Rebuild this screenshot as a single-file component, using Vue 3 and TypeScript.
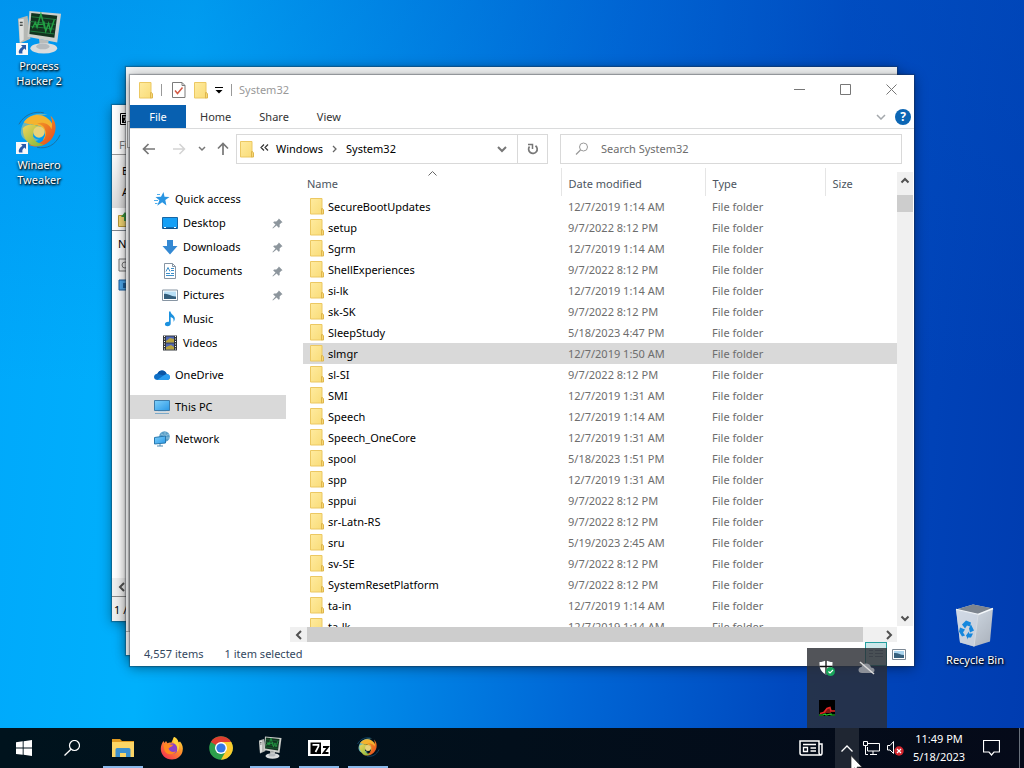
<script setup lang="ts">
import { ref } from 'vue'

interface FolderRow {
  name: string
  date: string
}

interface NavItem {
  label: string
  icon: string
  level: number
  pinned?: boolean
  gap?: boolean
  selected?: boolean
}

const rows: FolderRow[] = [
  { name: 'SecureBootUpdates', date: '12/7/2019 1:14 AM' },
  { name: 'setup', date: '9/7/2022 8:12 PM' },
  { name: 'Sgrm', date: '12/7/2019 1:14 AM' },
  { name: 'ShellExperiences', date: '9/7/2022 8:12 PM' },
  { name: 'si-lk', date: '12/7/2019 1:14 AM' },
  { name: 'sk-SK', date: '9/7/2022 8:12 PM' },
  { name: 'SleepStudy', date: '5/18/2023 4:47 PM' },
  { name: 'slmgr', date: '12/7/2019 1:50 AM' },
  { name: 'sl-SI', date: '9/7/2022 8:12 PM' },
  { name: 'SMI', date: '12/7/2019 1:31 AM' },
  { name: 'Speech', date: '12/7/2019 1:14 AM' },
  { name: 'Speech_OneCore', date: '12/7/2019 1:31 AM' },
  { name: 'spool', date: '5/18/2023 1:51 PM' },
  { name: 'spp', date: '12/7/2019 1:31 AM' },
  { name: 'sppui', date: '9/7/2022 8:12 PM' },
  { name: 'sr-Latn-RS', date: '9/7/2022 8:12 PM' },
  { name: 'sru', date: '5/19/2023 2:45 AM' },
  { name: 'sv-SE', date: '9/7/2022 8:12 PM' },
  { name: 'SystemResetPlatform', date: '9/7/2022 8:12 PM' },
  { name: 'ta-in', date: '12/7/2019 1:14 AM' },
  { name: 'ta-lk', date: '12/7/2019 1:14 AM' },
]
const selected = ref('slmgr')

const nav: NavItem[] = [
  { label: 'Quick access', icon: 'star', level: 0 },
  { label: 'Desktop', icon: 'desktop', level: 1, pinned: true },
  { label: 'Downloads', icon: 'download', level: 1, pinned: true },
  { label: 'Documents', icon: 'document', level: 1, pinned: true },
  { label: 'Pictures', icon: 'picture', level: 1, pinned: true },
  { label: 'Music', icon: 'music', level: 1 },
  { label: 'Videos', icon: 'video', level: 1 },
  { label: 'OneDrive', icon: 'onedrive', level: 0, gap: true },
  { label: 'This PC', icon: 'pc', level: 0, gap: true, selected: true },
  { label: 'Network', icon: 'network', level: 0, gap: true },
]

const apps = [
  { label: 'File Explorer', icon: 'explorer', open: true },
  { label: 'Firefox', icon: 'firefox', open: false },
  { label: 'Chrome', icon: 'chrome', open: false },
  { label: 'Process Hacker', icon: 'hacker', open: true },
  { label: '7-Zip', icon: 'sevenzip', open: true },
  { label: 'Winaero Tweaker', icon: 'winaero', open: true },
]
const query = ref('')
</script>

<template>
  <div class="desktop">
    <svg class="defs" aria-hidden="true">
      <defs>
        <linearGradient id="gFolder" x1="0" y1="0" x2="1" y2="1">
          <stop offset="0" stop-color="#ffeb9f" /><stop offset="1" stop-color="#f9dc79" />
        </linearGradient>
        <linearGradient id="gScreen" x1="0" y1="0" x2="1" y2="1">
          <stop offset="0" stop-color="#7fd0fb" /><stop offset="1" stop-color="#2a98e6" />
        </linearGradient>
        <linearGradient id="gBin" x1="0" y1="0" x2="1" y2="1">
          <stop offset="0" stop-color="#dce6f0" /><stop offset="1" stop-color="#a9b0ba" />
        </linearGradient>
        <linearGradient id="gFox" x1="1" y1="0" x2="0.2" y2="1">
          <stop offset="0" stop-color="#fff04a" /><stop offset="0.4" stop-color="#ff9a2a" /><stop offset="1" stop-color="#f53050" />
        </linearGradient>
        <linearGradient id="gBlade" x1="0" y1="0" x2="1" y2="1">
          <stop offset="0" stop-color="#f7b52a" /><stop offset="1" stop-color="#e5431d" />
        </linearGradient>
        <linearGradient id="gLeaf" x1="0" y1="0" x2="1" y2="1">
          <stop offset="0" stop-color="#f4d35a" /><stop offset="1" stop-color="#7cb83c" />
        </linearGradient>
        <symbol id="i-folder" viewBox="0 0 14 17">
          <path d="M.5.5h11.500v15.500H.5z" fill="url(#gFolder)" stroke="#ecc862" />
          <path d="M11.500 10.500h1l1 1.500v4h-2z" fill="#f6d878" stroke="#dfb64c" />
        </symbol>
        <symbol id="i-star" viewBox="0 0 16 16">
          <path d="M9.500 1l1 4.700 5 .3-4.200 3 1.100 5.500-4.200-3.200-5 3.500 2.200-5.500L1.500 6l5.500-.3z" fill="#2a95e2" />
          <path d="M0 9.500h4M1 12.500h2.500M3 3.500h3" stroke="#53b0ec" />
        </symbol>
        <symbol id="i-desktop" viewBox="0 0 16 16">
          <path d="M.5 2.500h15v11H.5z" fill="#16a0f6" stroke="#1766a5" />
          <path d="M1 13h14" stroke="#0e3c6c" /><path d="M2 12.500h2M12 12.500h2" stroke="#fff" />
        </symbol>
        <symbol id="i-download" viewBox="0 0 16 16">
          <path d="M5 1h6v6h4.500L8 15.500.5 7H5z" fill="#3489d3" />
        </symbol>
        <symbol id="i-document" viewBox="0 0 16 16">
          <path d="M2.500.5h8l3 3v12h-11z" fill="#fff" stroke="#8795a3" /><path d="M10.500.5v3h3" fill="none" stroke="#8795a3" />
          <path d="M4 8.500l2-4 2 4M9 5.500h3M9 7.500h3M4 10.500h4M9 10.500h3M4 12.500h8" fill="none" stroke="#3d8fc9" />
        </symbol>
        <symbol id="i-picture" viewBox="0 0 16 16">
          <path d="M.5 3h15v10.500H.5z" fill="#fff" stroke="#8795a3" /><path d="M2 4.500h12v7.500H2z" fill="#b9e0f7" />
          <path d="M2 7c4-1 7 3 12 2.500V12H2z" fill="#345f7d" />
        </symbol>
        <symbol id="i-music" viewBox="0 0 16 16">
          <path d="M7 .5h1.500c.3 3 4.500 4 4.300 7.200-.1 1.400-.6 2.200-1.300 3 .5-2.800-.5-4-2.800-4.700v6.500c0 1.700-1.300 2.800-3.200 2.800-1.500 0-2.600-.7-2.600-2 0-1.500 1.500-2.800 4.100-2.500z" fill="#1b91df" />
        </symbol>
        <symbol id="i-video" viewBox="0 0 16 16">
          <path d="M1 .5h14v15H1z" fill="#32363b" /><path d="M4 1.500h8v6H4zM4 8.500h8v6H4z" fill="#4f67b6" />
          <path d="M4 6l4-3 4 1v3.500H4zM4 12l5-2 3 2v2.500H4z" fill="#b8a33e" />
          <path d="M2.500 1v14M13.500 1v14" stroke="#fff" stroke-dasharray="1 1.500" />
        </symbol>
        <symbol id="i-onedrive" viewBox="0 0 16 16">
          <path d="M3.800 13C1.500 13 0 11.800 0 10s1.500-3.200 3.300-3.200C4.200 4.500 6 3.400 8 3.400c2.300 0 4 1.500 4.600 3.500C14.700 7 16 8.300 16 10s-1.300 3-3 3z" fill="#0f6fc6" />
          <path d="M3.300 6.800C4.200 4.500 6 3.400 8 3.400c2.300 0 4 1.500 4.600 3.500l-3 1.600z" fill="#0a55a6" />
          <path d="M3.200 12.900l6.300-4.300 3.100-1.700C14.700 7 16 8.300 16 10s-1.300 3-3 3z" fill="#2a9df0" />
        </symbol>
        <symbol id="i-pc" viewBox="0 0 16 16">
          <path d="M.5 1.500h15v10H.5z" fill="url(#gScreen)" stroke="#3e7ba8" /><path d="M1 14.500h14" stroke="#7ca9c8" /><path d="M4 12.500h8" stroke="#bdd6e6" />
        </symbol>
        <symbol id="i-network" viewBox="0 0 16 16">
          <circle cx="10.500" cy="5.500" r="5.300" fill="#5b9fc8" /><path d="M7 3l4 2 4-2M11 1v9M6 7h9" stroke="#8fc1dc" fill="none" />
          <path d="M.5 6.500l11-1.500v7L.5 13z" fill="url(#gScreen)" stroke="#2777ae" /><path d="M3 15h6M6 13v2" stroke="#4c8ab0" />
        </symbol>
        <symbol id="i-pin" viewBox="0 0 12 12">
          <path d="M7.500.5l4 4-1.200.7-2 2 .1 2.500-1.100.8-2.300-2.400L1 11.500.500 11l3.300-3.900L1.300 4.800l.9-1 2.500.1 2-2z" fill="#8d969d" />
        </symbol>
        <symbol id="i-explorer" viewBox="0 0 24 24">
          <path d="M1 3h8l2 2h12v5H1z" fill="#e09a20" /><path d="M1 6h22v15H1z" fill="#fcd565" />
          <path d="M6 12h12a1.500 1.500 0 0 1 1.500 1.500V21H15v-4H9v4H4.500v-7.500A1.500 1.500 0 0 1 6 12z" fill="#3d90ce" />
        </symbol>
        <symbol id="i-firefox" viewBox="0 0 24 24">
          <path d="M14 1c3 1 4 3.500 4.500 5.500l1.500-1c2.500 3 3.500 6 2.500 10-1 4.500-5.500 8-10.500 8C5.500 23.500.8 18.800.8 13c0-3 1-6 2.700-8l1 2L6 5l1.500 2.200c1.200-.7 2.500-.9 3.800-.4C12 5 13 3 14 1z" fill="url(#gFox)" />
          <circle cx="12.500" cy="12.500" r="5.300" fill="#8b43c8" /><path d="M3.500 9c3-2.500 7 .5 9.500-.5 0 2-3 2.500-4.500 4 1 3 4.500 4.500 7.500 2.500-1.500 4-9 5-11.500-.5z" fill="#ff8a1f" />
          <path d="M14 1c3 1 4 3.500 4.500 5.500C20 10 19 14 17 16c1-5-.5-7-3.500-9.500C12.800 5 13.200 3 14 1z" fill="#ffd53c" />
        </symbol>
        <symbol id="i-chrome" viewBox="0 0 24 24">
          <circle cx="12" cy="12" r="11.800" fill="#2da04b" /><path d="M12 12L1.800 6A11.800 11.800 0 0 1 22.200 6z" fill="#df3d2f" />
          <path d="M12 12V6h10.200A11.800 11.800 0 0 1 12 23.800l5-9z" fill="#fcca2d" /><path d="M12 6.500H22.400L17 14z" fill="#fcca2d" />
          <circle cx="12" cy="12" r="6" fill="#fff" /><circle cx="12" cy="12" r="4.600" fill="#3478e5" />
        </symbol>
        <symbol id="i-hacker" viewBox="0 0 48 48">
          <path d="M2 9l10-3 3 24-11 5z" fill="#b5b8b4" /><path d="M3 10l5-1v22l-4 3z" fill="#dfe1de" /><path d="M4 13h3M4 16h3" stroke="#4a4f4d" stroke-width="1.500" />
          <path d="M24 30l10 2-1 8h-8z" fill="#b9bcbb" /><ellipse cx="29" cy="40" rx="14" ry="5.500" fill="#d9dcdd" /><ellipse cx="28" cy="38" rx="7" ry="3" fill="#b5babe" />
          <path d="M14 1l33 3-4 30-31-6z" fill="#cccfcb" /><path d="M16 3l27 3-3 23-26-4z" fill="#12331f" />
          <path d="M16 7l26 3M15 12l26 3M15 17l25 3M15 22l25 3" stroke="#1f7a40" />
          <path d="M17 19l3-6 2 5 4-14 4 15M19 15h9M29 12l2 10 3-8 2 8 4-12" fill="none" stroke="#23a044" stroke-width="1.500" />
        </symbol>
        <symbol id="i-sevenzip" viewBox="0 0 24 24">
          <path d="M1 4h22v16H1z" fill="#fff" /><path d="M3.500 6.500h10.500v11.500H3.500z" fill="#000" />
          <path d="M5.500 8.800h6v1.500L8.500 16" fill="none" stroke="#fff" stroke-width="1.700" />
          <path d="M16 11h5l-4.500 6h5" fill="none" stroke="#000" stroke-width="1.800" />
        </symbol>
        <symbol id="i-winaero" viewBox="0 0 48 48">
          <path d="M5 24C6 10 19 2 33 6c-8 0-17 4-18 13-1 7 3 12 9 13-8 4-19 1-19-8z" fill="#6db6b8" />
          <path d="M8 14C16 3 32 4 38 16c3 8-2 16-10 16 4-4 3-11-3-14-6-2-12-2-17-4z" fill="#f4b32f" />
          <path d="M36 7c9 8 6 23-4 29-6 4-14 4-19 1 11 1 19-4 18-13-1-6-4-8-9-9 7-2 13 1 15 6 1-4 1-9-1-14z" fill="url(#gBlade)" />
          <path d="M7 20c0 15 11 22 22 17-7-1-12-5-11-11 1-4 4-6 8-6-6-5-14-5-19 0z" fill="url(#gLeaf)" />
          <circle cx="24" cy="24" r="6" fill="#e9d27a" />
          <path d="M3 16C9 5 20 2 29 4M46 27c-5 11-14 15-24 13" fill="none" stroke="#1d6f9f" />
        </symbol>
        <symbol id="i-bin" viewBox="0 0 40 44">
          <path d="M1 6l17-5 20 4-3 33-16 5-14-4z" fill="url(#gBin)" /><path d="M1 6l17-5 20 4-15 6z" fill="#7d858f" />
          <path d="M1 6l22 5 15-6" stroke="#f4f8fb" fill="none" stroke-width="1.500" /><path d="M23 11l-4 32" stroke="#d9dee2" />
          <path d="M1 6l22 5-4 32-14-4z" fill="#cdd6e2" opacity=".7" />
          <path d="M7 21l4-4 5 2-1 4-3-1-2 3zM16 21l3 6-4 2-1-4zM5 24l5 2-2 3 2 3-3 1-3-5zM11 32l3-4v2l4 0-2 4-3 0v2z" fill="#1587dd" />
        </symbol>
        <symbol id="i-shortcut" viewBox="0 0 12 12">
          <path d="M0 0h12v12H0z" fill="#f7f8fa" /><path d="M5 2h5v5L8.300 5.500C6.500 7 6 8.500 6.500 10.500H3C2 8 3.500 5.500 6.500 3.700z" fill="#2b5ba8" />
        </symbol>
        <symbol id="i-left" viewBox="0 0 16 16"><path d="M10 4L6 8l4 4" fill="none" stroke="#505050" stroke-width="2" /></symbol>
        <symbol id="i-right" viewBox="0 0 16 16"><path d="M6 4l4 4-4 4" fill="none" stroke="#505050" stroke-width="2" /></symbol>
        <symbol id="i-up" viewBox="0 0 16 16"><path d="M4.500 9.500L8 6l3.500 3.500" fill="none" stroke="#505050" stroke-width="2" /></symbol>
        <symbol id="i-down" viewBox="0 0 16 16"><path d="M4.500 6.500L8 10l3.500-3.500" fill="none" stroke="#505050" stroke-width="2" /></symbol>
      </defs>
    </svg>

    <div class="shortcuts">
      <button class="shortcut">
        <span class="art"><svg class="big"><use href="#i-hacker" /></svg><svg class="link-mark"><use href="#i-shortcut" /></svg></span>
        <span>Process<br />Hacker 2</span>
      </button>
      <button class="shortcut">
        <span class="art"><svg class="big"><use href="#i-winaero" /></svg><svg class="link-mark"><use href="#i-shortcut" /></svg></span>
        <span>Winaero<br />Tweaker</span>
      </button>
    </div>
    <button class="shortcut bin">
      <svg class="bin-art"><use href="#i-bin" /></svg>
      <span>Recycle Bin</span>
    </button>

    <section class="win zip" aria-label="7-Zip">
      <div class="zip-title"><svg viewBox="0 0 16 12" width="16" height="12"><path d="M.5.500h15v11H.5z" fill="#fff" stroke="#000" /><path d="M2 2h6v8H2z" fill="#000" /><path d="M3 4h3v1L4.500 9" fill="none" stroke="#fff" /></svg></div>
      <div class="zip-menu">File</div>
      <div class="zip-tools"><span>Extract</span><span>Add</span></div>
      <div class="zip-path"><svg viewBox="0 0 16 16" width="16" height="16"><path d="M.5 4.500h5l1 2h9v9H.5z" fill="#f5d874" stroke="#b79a3a" /><path d="M7 1l4 5H9v4H6V6H3z" fill="#3c9a3f" /></svg></div>
      <div class="zip-list">
        <span>Name</span>
        <svg viewBox="0 0 14 14" width="14" height="14"><path d="M1 1h12v12H1z" fill="#f0f0f0" stroke="#777" /><circle cx="7" cy="7" r="3" fill="none" stroke="#777" /></svg>
        <svg viewBox="0 0 14 14" width="14" height="14"><path d="M1 2h12v10H1z" fill="#4ea9ee" stroke="#1c5f9f" /><path d="M5 5h6v5H5z" fill="#1c5f9f" /></svg>
      </div>
      <div class="zip-scroll"><svg class="s16"><use href="#i-left" /></svg></div>
      <div class="zip-status">1 / 2 object(s)</div>
    </section>

    <section class="win hacker" aria-label="Process Hacker">
      <div class="hacker-title"></div>
      <div class="hacker-tabs"></div>
      <div class="hacker-body"></div>
      <div class="hacker-status"></div>
    </section>

    <main class="win explorer">
      <header class="titlebar">
        <svg class="folder"><use href="#i-folder" /></svg>
        <i class="sep"></i>
        <button aria-label="Properties"><svg viewBox="0 0 14 16" width="14" height="16"><path d="M.5.500h9.500l3 3v12H.5z" fill="#fff" stroke="#7b7b7b" /><path d="M10 .5v3h3" fill="none" stroke="#7b7b7b" /><path d="M3 8.500l2.500 3 5-6" fill="none" stroke="#d35a45" stroke-width="1.500" /></svg></button>
        <button aria-label="New folder"><svg class="folder"><use href="#i-folder" /></svg></button>
        <button class="caret" aria-label="Customize toolbar"><svg viewBox="0 0 8 8" width="8" height="8"><path d="M0 1.500h8" stroke="#000" /><path d="M.5 4h7L4 7.500z" fill="#000" /></svg></button>
        <i class="sep"></i>
        <span class="caption">System32</span>
        <div class="controls">
          <button aria-label="Minimize"><svg viewBox="0 0 11 11"><path d="M0 5.500h11" /></svg></button>
          <button aria-label="Maximize"><svg viewBox="0 0 11 11"><path d="M.5.500h10v10H.5z" /></svg></button>
          <button aria-label="Close"><svg viewBox="0 0 11 11"><path d="M.5.500l10 10M10.500.500l-10 10" /></svg></button>
        </div>
      </header>

      <nav class="tabs" aria-label="Ribbon">
        <button class="file">File</button>
        <button>Home</button>
        <button>Share</button>
        <button>View</button>
        <span class="fill"></span>
        <button class="mini" aria-label="Expand ribbon"><svg viewBox="0 0 10 6" width="10" height="6"><path d="M1 1l4 4 4-4" fill="none" stroke="#a4a8ac" stroke-width="1.500" /></svg></button>
        <button class="mini help" aria-label="Help"><span>?</span></button>
      </nav>

      <div class="navbar">
        <button class="nav30" aria-label="Back"><svg viewBox="0 0 14 12" width="14" height="12"><path d="M6.500 1L1.500 6l5 5M1.500 6H13" fill="none" stroke="#777" stroke-width="1.700" /></svg></button>
        <button class="nav30" aria-label="Forward"><svg viewBox="0 0 14 12" width="14" height="12"><path d="M7.500 1l5 5-5 5M12.500 6H1" fill="none" stroke="#d3d3d3" stroke-width="1.500" /></svg></button>
        <button class="nav16" aria-label="Recent locations"><svg viewBox="0 0 8 6" width="8" height="6"><path d="M1 1l3 3 3-3" fill="none" stroke="#777" stroke-width="1.500" /></svg></button>
        <button class="nav26" aria-label="Up"><svg viewBox="0 0 12 14" width="12" height="14"><path d="M1 6.500l5-5 5 5M6 1.500V13" fill="none" stroke="#777" stroke-width="1.700" /></svg></button>
        <div class="address">
          <svg class="folder"><use href="#i-folder" /></svg>
          <svg class="chevs" viewBox="0 0 9 7" width="9" height="7"><path d="M4 .500l-3 3 3 3M8 .500l-3 3 3 3" fill="none" stroke="#333" stroke-width="1.200" /></svg>
          <a href="#windows">Windows</a>
          <svg viewBox="0 0 5 8" width="5" height="8"><path d="M1 1l3 3-3 3" fill="none" stroke="#666" stroke-width="1.300" /></svg>
          <a href="#system32">System32</a>
          <span class="fill"></span>
          <button class="drop" aria-label="Previous locations"><svg viewBox="0 0 10 7" width="10" height="7"><path d="M1 1l4 4 4-4" fill="none" stroke="#777" stroke-width="2" /></svg></button>
          <button class="refresh" aria-label="Refresh"><svg viewBox="0 0 12 12" width="12" height="12"><path d="M2.500 3.500A4.300 4.300 0 1 0 8.500 2.700" fill="none" stroke="#777" stroke-width="1.700" /><path d="M1 1.500h4.500V6" fill="none" stroke="#777" stroke-width="1.500" /></svg></button>
        </div>
        <label class="search">
          <svg viewBox="0 0 14 14" width="14" height="14"><circle cx="8.500" cy="5" r="4" fill="none" stroke="#999" /><path d="M5.500 8L1 12.500" stroke="#999" stroke-width="1.300" /></svg>
          <input v-model="query" type="text" placeholder="Search System32" aria-label="Search System32" />
        </label>
      </div>

      <div class="content">
        <aside>
          <a
            v-for="item in nav"
            :key="item.label"
            :href="'#' + item.icon"
            :class="{ child: item.level === 1, gap: item.gap, current: item.selected }"
          >
            <svg class="s16"><use :href="'#i-' + item.icon" /></svg>
            <span>{{ item.label }}</span>
            <svg v-if="item.pinned" class="pin"><use href="#i-pin" /></svg>
          </a>
        </aside>

        <div class="pane">
          <div class="files">
            <table>
              <colgroup><col class="c-name" /><col class="c-date" /><col class="c-type" /><col /></colgroup>
              <thead>
                <tr>
                  <th scope="col" class="sorted">Name<svg viewBox="0 0 9 5" width="9" height="5"><path d="M.5 4.500l4-4 4 4" fill="none" stroke="#666" /></svg></th>
                  <th scope="col">Date modified</th>
                  <th scope="col">Type</th>
                  <th scope="col">Size</th>
                </tr>
              </thead>
              <tbody>
                <tr v-for="row in rows" :key="row.name" :class="{ picked: row.name === selected }" @click="selected = row.name">
                  <td><span class="cell"><svg class="folder"><use href="#i-folder" /></svg>{{ row.name }}</span></td>
                  <td>{{ row.date }}</td>
                  <td>File folder</td>
                  <td></td>
                </tr>
              </tbody>
            </table>
          </div>
          <div class="hscroll">
            <button aria-label="Scroll left"><svg class="s16"><use href="#i-left" /></svg></button>
            <span class="thumb"></span>
            <button aria-label="Scroll right"><svg class="s16"><use href="#i-right" /></svg></button>
          </div>
        </div>

        <div class="vscroll">
          <button aria-label="Scroll up"><svg class="s16"><use href="#i-up" /></svg></button>
          <span class="thumb"></span>
          <span class="fill"></span>
          <button aria-label="Scroll down"><svg class="s16"><use href="#i-down" /></svg></button>
        </div>
      </div>

      <footer class="status">
        <span>4,557 items</span>
        <span>1 item selected</span>
        <span class="fill"></span>
        <button class="details" aria-label="Details view"><svg viewBox="0 0 14 12" width="14" height="12"><path d="M0 2.500h4M6 2.500h8M0 5.500h4M6 5.500h8M0 8.500h4M6 8.500h8" stroke="#89a" /></svg></button>
        <button class="thumbs" aria-label="Large icons view"><svg viewBox="0 0 14 11" width="14" height="11"><path d="M.5.500h13v10H.5z" fill="#fff" stroke="#7c8894" /><path d="M2 2h10v7H2z" fill="#a9d4ee" /><path d="M2 4c4-.5 6 2 10 2v3H2z" fill="#36607d" /></svg></button>
      </footer>
    </main>

    <div class="tray-popup">
      <button aria-label="Windows Security"><svg viewBox="0 0 18 18" width="18" height="18"><path d="M8 1c2 1.500 4 2 6.500 2 0 5 0 9-6.500 12.500C1.500 12 1.500 8 1.500 3 4 3 6 2.500 8 1z" fill="#fff" /><path d="M8 1v14M1.500 7.500h13" stroke="#111" stroke-width="1.300" /><circle cx="12.500" cy="12.500" r="4.500" fill="#17a35a" /><path d="M10.500 12.500l1.500 1.500 3-3" stroke="#fff" fill="none" stroke-width="1.200" /></svg></button>
      <button aria-label="OneDrive"><svg viewBox="0 0 18 18" width="18" height="18"><path d="M4 14c-2.200 0-3.500-1.200-3.500-3S2 8 3.500 8C4.200 5.500 6 4.500 8 4.500c2.500 0 4.500 1.500 5 4 2 0 3.500 1 3.500 2.800S15 14 13.500 14z" fill="#8c9098" /><path d="M2 3l14 12" stroke="#dcdcdc" stroke-width="1.500" /></svg></button>
      <button aria-label="Process Hacker"><svg viewBox="0 0 18 18" width="18" height="18"><path d="M1 1h16v16H1z" fill="#000" /><path d="M4 14l4-4 3-2 2 3v3z" fill="#7d1513" /><path d="M2 14.500l4-1 3-4 3-1 1 3.500h4" stroke="#e52724" fill="none" stroke-width="1.500" /><path d="M1 16h4l2-1 1 1 5-1v1h4" stroke="#25c92b" fill="none" stroke-width="1.200" /></svg></button>
    </div>

    <footer class="taskbar">
      <button class="start" aria-label="Start"><svg viewBox="0 0 16 16" width="16" height="16"><path d="M0 2.200L6.700 1.300v6.300H0zM7.600 1.200L16 0v7.600H7.600zM0 8.500h6.700v6.300L0 13.900zM7.600 8.500H16V16l-8.400-1.200z" fill="#fff" /></svg></button>
      <button class="start" aria-label="Search"><svg viewBox="0 0 16 16" width="16" height="16"><circle cx="10.500" cy="5.500" r="5" fill="none" stroke="#fff" stroke-width="1.200" /><path d="M7 9.200L.5 15.500" stroke="#fff" stroke-width="1.300" /></svg></button>
      <div class="apps">
        <button v-for="app in apps" :key="app.label" :class="{ open: app.open }" :aria-label="app.label">
          <svg><use :href="'#i-' + app.icon" /></svg>
        </button>
      </div>
      <span class="fill"></span>
      <button class="news" aria-label="News"><svg viewBox="0 0 24 16" width="24" height="16"><path d="M1 1h19v11.500a2.300 2.300 0 0 0 2.500 2.500H3a2 2 0 0 1-2-2zM20 4h3v9a2 2 0 0 1-1 2" fill="none" stroke="#fff" stroke-width="1.500" /><path d="M4 4.500h13M11.500 8h5.500M11.500 11h5.500" stroke="#fff" stroke-width="1.500" /><path d="M4.500 7.500h4v4h-4z" fill="none" stroke="#fff" stroke-width="1.300" /></svg></button>
      <button class="tray active" aria-label="Show hidden icons"><svg viewBox="0 0 12 7" width="12" height="7"><path d="M.5 6.500l5.500-5.500 5.500 5.500" fill="none" stroke="#fff" stroke-width="1.300" /></svg></button>
      <button class="tray" aria-label="Network"><svg viewBox="0 0 17 14" width="17" height="14"><path d="M5 2.500h11.500v7.500H4.500V6M10 10v3.500M7 13.500h7" fill="none" stroke="#fff" /><path d="M.5.500h4v4h-4zM2.500 4.500v9H5" fill="none" stroke="#fff" /></svg></button>
      <button class="tray" aria-label="Volume muted"><svg viewBox="0 0 17 16" width="17" height="16"><path d="M.5 5.500H3L6.500 1.500v12L3 10H.5z" fill="none" stroke="#fff" /><circle cx="12" cy="11" r="4.700" fill="#d3252d" /><path d="M10 9l4 4M14 9l-4 4" stroke="#fff" stroke-width="1.200" /></svg></button>
      <button class="clock"><span>11:49 PM</span><span>5/18/2023</span></button>
      <button class="action" aria-label="Notifications"><svg viewBox="0 0 17 16" width="17" height="16"><path d="M.5.500h16v11.500H11l-2.500 3L6 12H.5z" fill="none" stroke="#fff" stroke-width="1.200" /></svg></button>
      <button class="peek" aria-label="Show desktop"></button>
    </footer>

    <svg class="cursor" viewBox="0 0 12 19"><path d="M.5.500v15.800l3.600-3.400 2.300 5.500 2.400-1-2.300-5.300h5z" fill="#fff" stroke="#222" stroke-width=".7" /></svg>
  </div>
</template>

<style>
html,
body {
  margin: 0;
  overflow: hidden;
}
</style>

<style scoped>
.desktop {
  position: relative;
  display: flex;
  flex-direction: column;
  height: 100vh;
  overflow: hidden;
  font: 11px/16px "Noto Sans", "Open Sans", sans-serif;
  color: #000;
  background:
    linear-gradient(180deg, rgba(0, 90, 200, 0.25), rgba(0, 90, 200, 0) 50%),
    linear-gradient(95deg, #00a8fb 0%, #00b0fc 18%, #0090ec 36%, #0067d6 58%, #0048be 78%, #003cb0 100%);
}
.defs {
  position: absolute;
  width: 0;
  height: 0;
}
svg {
  display: block;
  flex: none;
}
button {
  display: flex;
  align-items: center;
  justify-content: center;
  border: 0;
  padding: 0;
  background: none;
  font: inherit;
  color: inherit;
}
a {
  color: inherit;
  text-decoration: none;
}
.fill {
  flex: 1;
}
.s16 {
  width: 16px;
  height: 16px;
}
.folder {
  width: 14px;
  height: 17px;
}

.shortcuts {
  display: flex;
  flex-direction: column;
  align-items: flex-start;
  gap: 21px;
  padding: 10px 2px;
}
.shortcut {
  flex-direction: column;
  gap: 2px;
  width: 74px;
  line-height: 15px;
  color: #fff;
  text-shadow: 1px 1px 2px #000, 0 1px 3px #000;
}
.art {
  position: relative;
}
.big {
  width: 46px;
  height: 46px;
}
.link-mark {
  position: absolute;
  left: 0;
  bottom: 1px;
  width: 12px;
  height: 12px;
}
.bin {
  position: absolute;
  right: 12px;
  bottom: 101px;
  gap: 4px;
}
.bin-art {
  width: 40px;
  height: 45px;
}

.win {
  position: absolute;
  display: flex;
  flex-direction: column;
  box-sizing: border-box;
  background: #fff;
  box-shadow: 0 2px 12px rgba(0, 0, 0, 0.4), 0 0 1px 1px rgba(40, 50, 60, 0.35);
}
.zip {
  inset: 105px 200px 147px 112px;
  overflow: hidden;
}
.zip-title {
  padding: 8px;
}
.zip-menu {
  flex: none;
  height: 22px;
  padding: 4px 7px 0;
  border-bottom: 1px solid #999;
  box-sizing: border-box;
  color: #777;
}
.zip-tools {
  display: flex;
  flex-direction: column;
  gap: 5px;
  padding: 8px 10px;
  background: linear-gradient(#fafafa, #dcdcdc);
}
.zip-path {
  padding: 3px 6px;
  border-bottom: 1px solid #7f8790;
}
.zip-list {
  flex: 1;
  display: flex;
  flex-direction: column;
  gap: 6px;
  padding: 5px 6px;
}
.zip-scroll {
  padding: 1px 2px;
  background: #f0f0f0;
  border-bottom: 1px solid #888;
}
.zip-status {
  padding: 5px 2px 3px;
  background: #f0f0f0;
}
.hacker {
  inset: 67px 127px 113px 126px;
  background: #f0f2f3;
}
.hacker-title {
  height: 54px;
}
.hacker-tabs {
  height: 25px;
  margin-left: 1px;
  border: 1px solid #999;
}
.hacker-body {
  flex: 1;
  margin-left: 2px;
  background: #c9c9c9;
}
.hacker-status {
  height: 23px;
  border-top: 1px solid #aaa;
}

.explorer {
  inset: 75px 110px 102px 130px;
}
.titlebar {
  display: flex;
  align-items: center;
  height: 30px;
  padding-left: 9px;
}
.titlebar .sep {
  width: 1px;
  height: 12px;
  margin: 0 7px 0 8px;
  background: #999;
}
.titlebar .sep + button {
  margin: 0 8px 0 3px;
}
.titlebar .caret {
  margin-left: 7px;
}
.titlebar .caption {
  color: #999;
}
.controls {
  display: flex;
  align-self: flex-start;
  margin-left: auto;
}
.controls button {
  width: 46px;
  height: 29px;
}
.controls svg {
  width: 11px;
  height: 11px;
  fill: none;
  stroke: #777;
}

.tabs {
  display: flex;
  height: 23px;
  border-bottom: 1px solid #dadbdc;
  color: #333;
}
.tabs button {
  padding: 0 14px;
}
.tabs .file {
  width: 56px;
  padding: 0;
  background: #0860b0;
  color: #fff;
}
.tabs .mini {
  width: 22px;
  padding: 0;
}
.tabs .help span {
  width: 16px;
  border-radius: 8px;
  background: #0c66b4;
  color: #fff;
  font-size: 12px;
  font-weight: bold;
}

.navbar {
  display: flex;
  padding: 5px 12px 4px 4px;
}
.nav30 {
  width: 30px;
}
.nav16 {
  width: 16px;
}
.nav26 {
  width: 26px;
}
.address,
.search {
  display: flex;
  align-items: center;
  box-sizing: border-box;
  height: 30px;
  border: 1px solid #d9d9d9;
}
.address {
  flex: 307 1 0;
  gap: 9px;
  margin-right: 12px;
  padding-left: 3px;
}
.address .chevs {
  margin: 0 -2px 4px -3px;
}
.drop {
  width: 12px;
}
.refresh {
  align-self: stretch;
  width: 30px;
  border-left: 1px solid #d9d9d9;
}
.search {
  flex: 326 1 0;
  gap: 12px;
  padding-left: 14px;
}
.search input {
  flex: 1;
  min-width: 0;
  border: 0;
  padding: 0;
  outline: 0;
  background: none;
  font: inherit;
}
.search input::placeholder {
  color: #6d6d6d;
  opacity: 1;
}

.content {
  flex: 1;
  display: flex;
  min-height: 0;
}
aside {
  display: flex;
  flex-direction: column;
  flex: none;
  width: 156px;
  padding: 19px 4px 0 0;
}
aside a {
  display: flex;
  align-items: center;
  height: 24px;
  padding-left: 24px;
  gap: 5px;
}
aside a.child {
  padding-left: 32px;
}
aside a.gap {
  margin-top: 8px;
}
aside a.current {
  background: #d9d9d9;
}
.pin {
  width: 11px;
  height: 11px;
  margin: 0 3px 0 auto;
}
.pane {
  flex: 1;
  display: flex;
  flex-direction: column;
  min-width: 0;
}
.files {
  flex: 1;
  min-height: 0;
  overflow: hidden;
  padding-left: 13px;
}
table {
  width: 100%;
  table-layout: fixed;
  border-collapse: collapse;
  color: #6d6d6d;
}
.c-name {
  width: 258px;
}
.c-date {
  width: 144px;
}
.c-type {
  width: 120px;
}
th {
  box-sizing: border-box;
  height: 28px;
  padding: 4px 7px 0;
  border-right: 1px solid #e5e5e5;
  font-weight: normal;
  text-align: left;
  color: #4c5560;
}
th:last-child {
  border-right: 0;
}
th.sorted {
  position: relative;
  padding-left: 4px;
}
.sorted svg {
  position: absolute;
  left: calc(50% - 4px);
  top: 3px;
}
td {
  height: 21px;
  padding: 0 7px;
}
.cell {
  display: flex;
  align-items: center;
  gap: 4px;
  color: #000;
}
.picked {
  background: #d9d9d9;
}
.hscroll {
  display: flex;
  height: 15px;
  background: #f0f0f0;
}
.hscroll button {
  width: 17px;
}
.hscroll .thumb {
  flex: 1;
  margin-right: 17px;
  background: #cdcdcd;
}
.vscroll {
  display: flex;
  flex-direction: column;
  width: 16px;
  margin: 4px 1px 16px 0;
  background: #f0f0f0;
}
.vscroll button {
  height: 17px;
}
.vscroll .thumb {
  height: 17px;
  margin-top: 6px;
  background: #cdcdcd;
}
.status {
  display: flex;
  align-items: center;
  height: 24px;
  gap: 21px;
  padding: 0 8px 0 14px;
  color: #334760;
}
.status .details {
  width: 22px;
  height: 24px;
  box-sizing: border-box;
  margin-right: -17px;
  border: 1px solid #26a0a0;
  background: #cce8ea;
}
.status .thumbs {
  width: 15px;
}

.tray-popup {
  position: absolute;
  right: 137px;
  bottom: 40px;
  display: grid;
  grid-template-columns: 40px 40px;
  grid-auto-rows: 40px;
  background: rgba(44, 46, 52, 0.82);
}

.taskbar {
  display: flex;
  height: 40px;
  margin-top: auto;
  background: linear-gradient(90deg, #00131d, #020f1b 50%, #050a19);
  color: #fff;
}
.start {
  width: 48px;
}
.apps {
  display: flex;
  gap: 9px;
  margin-left: 7px;
}
.apps button {
  box-sizing: border-box;
  width: 40px;
  border-bottom: 2px solid transparent;
  padding-top: 2px;
}
.apps button.open {
  border-bottom-color: #8ab8ea;
}
.apps svg {
  width: 24px;
  height: 24px;
}
.news {
  width: 48px;
}
.tray {
  width: 24px;
}
.tray.active {
  background: #1f2632;
}
.clock {
  flex-direction: column;
  width: 64px;
  line-height: 18px;
}
.action {
  width: 40px;
}
.peek {
  width: 5px;
  margin-left: 8px;
  border-left: 1px solid #69717c;
}
.cursor {
  position: absolute;
  right: 161px;
  bottom: -6px;
  width: 13px;
  height: 19px;
}
</style>
